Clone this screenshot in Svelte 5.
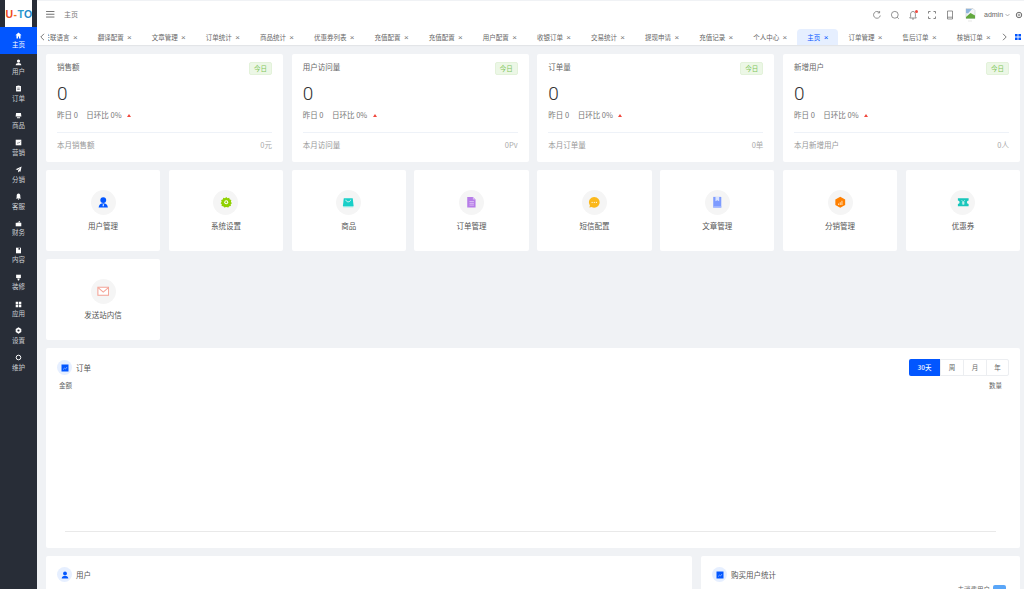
<script>
  const nav = ['主页','用户','订单','商品','营销','分销','客服','财务','内容','装修','应用','设置','维护'];
  const tabs = ['翻译配置','文章管理','订单统计','商品统计','优惠券列表','充值配置','充值配置','用户配置','收银订单','交易统计','提现申请','充值记录','个人中心','主页','订单管理','售后订单','核销订单'];
  const stats = [
    {t:'销售额', m:'本月销售额', u:'0元'},
    {t:'用户访问量', m:'本月访问量', u:'0Pv'},
    {t:'订单量', m:'本月订单量', u:'0单'},
    {t:'新增用户', m:'本月新增用户', u:'0人'}
  ];
  const quick = [
    {k:'user', t:'用户管理'},{k:'gear', t:'系统设置'},{k:'bag', t:'商品'},{k:'doc', t:'订单管理'},
    {k:'chat', t:'短信配置'},{k:'book', t:'文章管理'},{k:'hex', t:'分销管理'},{k:'coupon', t:'优惠券'},{k:'mail', t:'发送站内信'}
  ];
  const ranges = ['30天','周','月','年'];
</script>

{#snippet navIcon(i)}
  <svg class="nicon" viewBox="0 0 10 10" fill="#fff">
    {#if i===0}<path d="M5 .8 .6 4.800h1.500V9.200h2.200V6.400h1.400v2.800h2.200V4.800h1.500z"/>
    {:else if i===1}<circle cx="5" cy="3" r="2.300"/><path d="M1 9c0-2.300 1.800-3.400 4-3.400S9 6.700 9 9z"/>
    {:else if i===2}<path d="M1.500 1.400h7V9.200h-7z"/><path d="M3.500 .8h3v1.400h-3z"/><path d="M3.200 4.400h3.600M3.200 6.400h3.600" stroke="#282d37" stroke-width=".8"/>
    {:else if i===3}<path d="M1.500 1.400h7l.6 5H.9z"/><path d="M2.800 7h4.400v2H2.800z" opacity=".75"/>
    {:else if i===4}<path d="M1 1h8v8H1z"/><path d="M2.800 6.600 4.500 5 5.500 5.900 7.400 3.800" stroke="#282d37" stroke-width=".7" fill="none"/>
    {:else if i===5}<path d="M9.400.8 .8 4.800l3 1L8 2.600 4.400 6.400v3L6 7.400l1.800.9z"/>
    {:else if i===6}<path d="M5 .8C3.200.8 2.400 2.400 2.400 4v2.600L1.200 7.800h7.600L7.600 6.600V4C7.600 2.400 6.800.8 5 .8z"/><circle cx="5" cy="8.700" r=".9"/>
    {:else if i===7}<path d="M1 4h8v5H1z"/><path d="M3 3.600 6.800 1.400l1 2.200z"/>
    {:else if i===8}<path d="M1.400 1h7.200v8H1.400z"/><path d="M5 1v3.200l1.100-.8 1.100.8V1" fill="#282d37"/>
    {:else if i===9}<path d="M1.600 1h6.800v4.800H1.600z"/><path d="M3.200 6.400h3.600L5.700 9.400H4.300z"/>
    {:else if i===10}<path d="M1 1h3.500v3.500H1zM5.500 1H9v3.500H5.500zM1 5.500h3.500V9H1zM5.500 5.500H9V9H5.500z"/>
    {:else if i===11}<path fill-rule="evenodd" d="M5 .5 9 2.800v4.400L5 9.500 1 7.200V2.800zM5 3.400a1.600 1.600 0 1 0 0 3.200 1.600 1.600 0 0 0 0-3.200z"/>
    {:else}<circle cx="5" cy="5" r="3.300" fill="none" stroke="#fff" stroke-width="1.400"/>
    {/if}
  </svg>
{/snippet}

{#snippet quickIcon(k)}
  <svg class="qicon" viewBox="0 0 14 14">
    {#if k==='user'}
      <circle cx="7" cy="4.600" r="3.300" fill="#0256ff"/><path d="M1.800 13c.2-3.400 2.400-4.900 5.200-4.900s5 1.500 5.200 4.900z" fill="#0256ff"/><path d="M6.600 9h.8l.3 2.400h-1.400z" fill="#fff"/>
    {:else if k==='gear'}
      <path d="M7 1.200 8.400 2.400 10.300 2l.6 1.800 1.800.7-.5 1.800L13.300 8l-1.300 1.300.2 1.900-1.900.3-1 1.500L7 12.300l-2.300.7-1-1.500-1.900-.3.200-1.900L.7 8l1.100-1.700-.5-1.800 1.800-.7.600-1.800 1.900.4z" fill="#8fd100"/><circle cx="7" cy="7" r="2.200" fill="#fff"/><circle cx="7" cy="7" r="1.100" fill="#8fd100"/>
    {:else if k==='bag'}
      <path d="M2 2.400h10l1 8.800H1z" fill="#19cfc8"/><path d="M1 11.200h12l-.5 1.300h-11z" fill="#8ce8e3"/><path d="M4.300 4.200c.3 1.600 1.300 2.300 2.700 2.300s2.400-.7 2.700-2.300" fill="none" stroke="#fff" stroke-width=".9"/>
    {:else if k==='doc'}
      <path d="M2.500 1h6.300l3 3v9h-9.300z" fill="#b77de8"/><path d="M8.800 1v3h3z" fill="#d9bdf3"/><path d="M5 6.200h5M5 8.200h5M5 10.200h5" stroke="#e8d6f8" stroke-width=".8"/>
    {:else if k==='chat'}
      <path d="M7 1a6 6 0 1 1-3 11.200L1.500 13l.7-2.500A6 6 0 0 1 7 1z" fill="#fbb81c"/><circle cx="4.600" cy="7" r=".7" fill="#fff"/><circle cx="7" cy="7" r=".7" fill="#fff"/><circle cx="9.400" cy="7" r=".7" fill="#fff"/>
    {:else if k==='book'}
      <path d="M2.500 1h9v12h-9z" fill="#7d9bff"/><path d="M5 1h4.200v5L7.100 4.800 5 6z" fill="#d9e3ff"/><path d="M2.500 11.500h9V13h-9z" fill="#a9bdff"/>
    {:else if k==='hex'}
      <path d="M7 .8 12.500 4v6L7 13.200 1.500 10V4z" fill="#ff8000"/><path d="M4.500 8.500h1.200v1.500H4.500zM6.400 7h1.200v3H6.400zM8.300 5.200h1.200V10H8.300z" fill="#ffd9ad"/>
    {:else if k==='coupon'}
      <path d="M1 2.600h12v2.500a1.900 1.900 0 0 0 0 3.800v2.500H1V8.900a1.900 1.900 0 0 0 0-3.800z" fill="#19c6bb"/><path d="M5.200 4.700 7 6.800l1.800-2.100M7 6.800v3M5.500 7.500h3M5.500 8.800h3" stroke="#fff" stroke-width=".7" fill="none"/>
    {:else}
      <path d="M1 2.500h12v9H1z" fill="#fff" stroke="#f4a396" stroke-width="1.200"/><path d="M1.500 3.300 7 8l5.500-4.700" fill="none" stroke="#f4a396" stroke-width="1.200"/>
    {/if}
  </svg>
{/snippet}

{#snippet badge(person)}
  <span class="badge">
    <svg viewBox="0 0 8 8">
      {#if person}
        <circle cx="4" cy="2.400" r="1.900" fill="#0256ff"/><path d="M.7 7.600C.8 5.600 2.200 4.800 4 4.800s3.200.8 3.300 2.800z" fill="#0256ff"/>
      {:else}
        <path d="M.5.500h7v7h-7z" fill="#0256ff"/><path d="M2 5.600 3.500 4.200l1 .8L6 3" fill="none" stroke="#bcd2ff" stroke-width=".6"/>
      {/if}
    </svg>
  </span>
{/snippet}

<div class="app">
  <aside class="side">
    <div class="logo"><b class="u">U</b><b class="d">-</b><b class="t">T</b><b class="o">O</b></div>
    {#each nav as n, i}
      <div class="nav" class:on={i===0}>
        {@render navIcon(i)}
        <span>{n}</span>
      </div>
    {/each}
  </aside>

  <main class="main">
    <header class="top">
      <svg class="burger" viewBox="0 0 9 7"><path d="M0 .5h9M0 3.500h9M0 6.500h9" stroke="#555" stroke-width=".9"/></svg>
      <span class="crumb">主页</span>
      <div class="tools">
        <svg viewBox="0 0 10 10" class="tool"><path d="M8.300 5.500A3.400 3.400 0 1 1 7.400 2.500M7.600 1v1.900H5.700" fill="none" stroke="#666" stroke-width=".7"/></svg>
        <svg viewBox="0 0 10 10" class="tool"><circle cx="4.800" cy="4.800" r="3.400" fill="none" stroke="#666" stroke-width=".7"/><path d="M7.300 7.300 8.800 8.800" stroke="#666" stroke-width=".7"/></svg>
        <span class="bell">
          <svg viewBox="0 0 10 10" class="tool"><path d="M5 1.500C3.300 1.500 2.600 2.800 2.600 4.200v2.500L1.700 8h6.600l-.9-1.300V4.200C7.400 2.800 6.700 1.500 5 1.500zM4 9h2" fill="none" stroke="#666" stroke-width=".7"/></svg>
          <i></i>
        </span>
        <svg viewBox="0 0 10 10" class="tool"><path d="M1.500 3.500v-2h2M6.500 1.500h2v2M8.500 6.500v2h-2M3.500 8.500h-2v-2" fill="none" stroke="#666" stroke-width=".8"/></svg>
        <svg viewBox="0 0 10 10" class="tool"><path d="M2.500 1h5v8h-5zM2.500 7.200h5" fill="none" stroke="#666" stroke-width=".7"/></svg>
      </div>
      <svg class="avatar" viewBox="0 0 12 15"><path d="M2 1.500h7l2 2v8H2z" fill="#f3f5f7" stroke="#b9c0c6" stroke-width=".5"/><path d="M2 10 6.500 6 11 8.500v3H2z" fill="#62a83e"/><path d="M2 2h6L4 6.500 2 6z" fill="#8fb5dd"/><path d="M4 14h4" stroke="#ccc" stroke-width=".5"/></svg>
      <span class="admin">admin</span>
      <svg class="chev" viewBox="0 0 6 4"><path d="M.6.800 3 3.200 5.400.800" fill="none" stroke="#666" stroke-width=".6"/></svg>
      <svg class="cog" viewBox="0 0 10 10"><circle cx="5" cy="5" r="3.400" fill="none" stroke="#666" stroke-width="1.200"/><circle cx="5" cy="5" r="1.200" fill="none" stroke="#666" stroke-width=".8"/></svg>
    </header>

    <nav class="tabs">
      <svg class="arrow" viewBox="0 0 5 8"><path d="M4 .8.800 4 4 7.200" fill="none" stroke="#555" stroke-width=".8"/></svg>
      <div class="clip">
        <div class="strip">
          <span class="tab">关联语言<em>×</em></span>
          {#each tabs as t}
            <span class="tab" class:act={t==='主页'}>{t}<em>×</em></span>
          {/each}
        </div>
      </div>
      <svg class="arrow" viewBox="0 0 5 8"><path d="M1 .8 4.200 4 1 7.200" fill="none" stroke="#555" stroke-width=".8"/></svg>
      <svg class="grid" viewBox="0 0 6 6"><path d="M0 0h2.600v2.600H0zM3.400 0H6v2.600H3.400zM0 3.400h2.600V6H0zM3.400 3.400H6V6H3.400z" fill="#0256ff"/></svg>
    </nav>

    <div class="content">
      <section class="stats">
        {#each stats as s}
          <article class="card stat">
            <div class="stat-head"><span class="st">{s.t}</span><span class="tag">今日</span></div>
            <div class="num">0</div>
            <div class="cmp"><span>昨日 0</span><span>日环比 0%</span><i class="tri"></i></div>
            <div class="foot"><span>{s.m}</span><span class="u2">{s.u}</span></div>
          </article>
        {/each}
      </section>

      <section class="quick">
        {#each quick as q}
          <div class="card q">
            <span class="circle">{@render quickIcon(q.k)}</span>
            <span>{q.t}</span>
          </div>
        {/each}
      </section>

      <section class="card chart">
        <div class="chart-head">
          <div class="title">{@render badge(false)}<span>订单</span></div>
          <div class="seg">
            {#each ranges as r, i}<span class:sel={i===0}>{r}</span>{/each}
          </div>
        </div>
        <div class="axis-names"><span>金额</span><span>数量</span></div>
        <div class="axis"></div>
      </section>

      <section class="bottom">
        <div class="card b1"><div class="title">{@render badge(true)}<span>用户</span></div></div>
        <div class="card b2">
          <div class="title">{@render badge(false)}<span>购买用户统计</span></div>
          <div class="legend"><span>未消费用户</span><i></i></div>
        </div>
      </section>
    </div>
  </main>
</div>

<style>
  :global(body) { margin: 0; background: #f0f2f5; overflow: hidden; }
  * { box-sizing: border-box; }
  .app {
    display: flex; width: 1024px; height: 589px; overflow: hidden;
    font-family: "Noto Sans CJK SC", "Noto Sans", sans-serif; color: #555;
  }
  .side { width: 37px; flex: none; background: #282d37; display: flex; flex-direction: column; }
  .logo {
    height: 27px; margin: 0 5px; background: #fff; display: flex; align-items: center; justify-content: flex-start;
    font: 700 10.500px "Liberation Sans", sans-serif; overflow: hidden; padding-left: .5px; padding-top: 1px;
  }
  .logo .u { color: #ef4a23; } .logo .d { color: #f07a1e; margin: 0 .5px; } .logo .t { color: #2b9ccf; } .logo .o { color: #1e88c9; }
  .nav {
    height: 26.900px; display: flex; flex-direction: column; align-items: center; justify-content: center;
    color: #cdd0d4; font-size: 6.500px; line-height: 9px;
  }
  .nav.on { background: #0256ff; color: #fff; }
  .nicon { width: 7px; height: 7px; margin-bottom: 1.500px; }

  .main { flex: 1; min-width: 0; display: flex; flex-direction: column; }
  .top {
    height: 27px; flex: none; margin-top: 1px; background: #fff; display: flex; align-items: center; padding: 0 1px 0 9px;
  }
  .burger { width: 8.500px; height: 6.500px; }
  .crumb { font-size: 7px; line-height: 9px; color: #777; margin: -1px 0 0 9.500px; }
  .tools { margin-left: auto; display: flex; gap: 8.300px; align-items: center; }
  .tool { width: 10px; height: 10px; display: block; }
  .bell { position: relative; display: block; }
  .bell i { position: absolute; top: 0; right: 0; width: 3px; height: 3px; border-radius: 50%; background: #f0483e; }
  .avatar { width: 12px; height: 15px; margin-left: 9px; }
  .admin { font: 7px "Liberation Sans", sans-serif; color: #666; margin-left: 8px; width: 17px; }
  .chev { width: 5px; height: 4px; margin-left: 4px; }
  .cog { width: 8px; height: 8px; margin-left: 5px; }

  .tabs {
    height: 17px; flex: none; background: #fff; display: flex; align-items: stretch; padding-left: 3px;
    box-shadow: 0 1px 1px rgba(0,0,0,.05);
  }
  .arrow { width: 5px; height: 8px; align-self: center; flex: none; }
  .clip { width: 950px; margin: 0 4px 0 3px; flex: none; overflow: hidden; }
  .strip { display: flex; margin-left: -14.500px; white-space: nowrap; padding-top: 1px; }
  .tab {
    height: 16px; padding: 0 10.050px; font-size: 6.500px; color: #666; display: flex; align-items: center; flex: none;
    border-radius: 4px 4px 0 0;
  }
  .tab em { font-style: normal; font-size: 8px; width: 6px; margin-left: 2px; text-align: right; color: #777; font-family: "Liberation Sans", sans-serif; }
  .tab.act { background: #e6efff; color: #0256ff; }
  .tab.act em { color: #0256ff; }
  .grid { width: 6px; height: 6px; align-self: center; margin-left: 8px; flex: none; }

  .content { flex: 1; padding: 9px 4px 0 9px; display: flex; flex-direction: column; gap: 8px; min-height: 0; }
  .card { background: #fff; border-radius: 2px; }
  .stats { display: grid; grid-template-columns: repeat(4, 1fr); gap: 8.670px; flex: none; }
  .stat { height: 108px; padding: 8px 11px 0; display: flex; flex-direction: column; }
  .stat-head { display: flex; justify-content: space-between; align-items: flex-start; font-size: 7.500px; color: #666; }
  .st { line-height: 10px; }
  .tag {
    width: 23px; height: 13px; border-radius: 2px; background: #ecf7e6; border: 1px solid #e3f2da; color: #7ec65a;
    font-size: 6.500px; line-height: 11px; text-align: center;
  }
  .num { font: 300 19px/20px "Roboto", sans-serif; color: #333; margin-top: 9px; }
  .cmp { display: flex; align-items: center; gap: 8.500px; font-size: 7.500px; line-height: 12px; color: #777; margin-top: 5px; }
  .tri { width: 0; height: 0; border: 2px solid transparent; border-bottom: 3px solid #f0483e; border-top: 0; margin-left: -3px; }
  .foot {
    margin-top: 11px; padding-top: 6px; border-top: 1px solid #eef2f8; display: flex; justify-content: space-between;
    font-size: 7.500px; line-height: 12px; color: #999;
  }
  .u2 { color: #aaa; }

  .quick { display: grid; grid-template-columns: repeat(8, 1fr); grid-auto-rows: 81px; gap: 8px 8.670px; flex: none; }
  .q { display: flex; flex-direction: column; align-items: center; padding-top: 20px; font-size: 7.500px; line-height: 12px; color: #555; }
  .circle { width: 25px; height: 25px; border-radius: 50%; background: #f5f5f5; display: flex; align-items: center; justify-content: center; margin-bottom: 4.500px; }
  .qicon { width: 12.500px; height: 12.500px; }

  .chart { height: 200px; padding: 11px 11px 0; flex: none; }
  .chart-head { display: flex; justify-content: space-between; align-items: center; height: 17px; }
  .title { display: flex; align-items: center; gap: 4px; font-size: 7.500px; color: #555; }
  .badge { width: 15px; height: 15px; border-radius: 50%; background: #e6efff; display: flex; align-items: center; justify-content: center; }
  .badge svg { width: 8px; height: 8px; }
  .seg { display: flex; height: 17px; border: 1px solid #eceef1; border-radius: 2px; font-size: 6.500px; line-height: 15px; color: #666; }
  .seg span { width: 23px; text-align: center; border-left: 1px solid #eceef1; }
  .seg span:first-child { border-left: 0; }
  .seg span:last-child { width: 22px; }
  .seg .sel { width: 31px; margin: -1px 0 -1px -1px; line-height: 17px; background: #0256ff; color: #fff; border-radius: 2px 0 0 2px; font-weight: 500; }
  .axis-names { display: flex; justify-content: space-between; font-size: 6.500px; line-height: 9px; margin-top: 5px; padding: 0 7px 0 2px; color: #666; }
  .axis { height: 1px; background: #e9e9e9; margin: 141px 13px 0 8px; }

  .bottom { display: grid; grid-template-columns: 646px 319px; gap: 9px; flex: none; }
  .b1, .b2 { height: 60px; padding: 11px; position: relative; }
  .legend { position: absolute; top: 29px; right: 14px; display: flex; align-items: center; gap: 3px; font-size: 6.500px; line-height: 9px; color: #666; }
  .legend i { width: 13px; height: 9px; border-radius: 2px; background: #5aa6f8; }
</style>
